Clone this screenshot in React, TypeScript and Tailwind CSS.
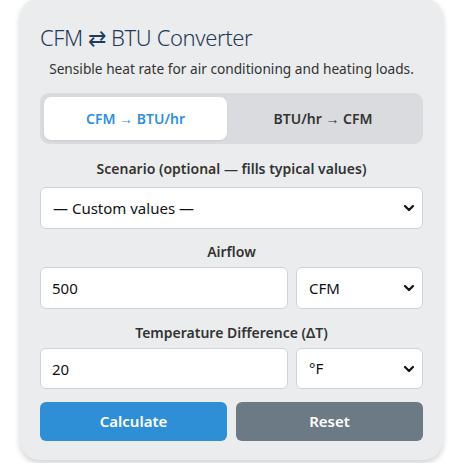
import React, { useState } from "react";

const font = { fontFamily: '"Segoe UI", "Noto Sans", "Open Sans", sans-serif' };

function Chevron() {
  return (
    <svg width="12" height="8" viewBox="0 0 12 8" className="pointer-events-none absolute right-[8px] top-1/2 -translate-y-1/2">
      <path d="M2 2 L6 6 L10 2" fill="none" stroke="#111" strokeWidth="2.2" strokeLinecap="round" strokeLinejoin="round" />
    </svg>
  );
}

function Select({ value, options, className }: { value: string; options: string[]; className?: string }) {
  return (
    <div className={"relative " + (className ?? "")}>
      <select
        defaultValue={value}
        className="h-full w-full appearance-none rounded-[6px] border border-[#cfd3d6] bg-white pl-[12px] pr-[28px] text-[15px] text-[#111] outline-none"
      >
        {options.map((o) => (
          <option key={o}>{o}</option>
        ))}
      </select>
      <Chevron />
    </div>
  );
}

export default function App() {
  const [mode, setMode] = useState(0);
  return (
    <div className="min-h-[465px] bg-white" style={font}>
      <div className="ml-[20px] -mt-[2px] h-[462px] w-[423px] rounded-[20px] bg-[#ebeced] px-[20px] pt-[25px] shadow-[0_3px_6px_rgba(0,0,0,0.18)]">
        <h1 className="text-[22px] font-light leading-[28px] tracking-[-0.4px] text-[#1f3a5a]">CFM ⇄ BTU Converter</h1>
        <p className="mt-[8px] text-center text-[13.7px] leading-[20px] text-[#333]">
          Sensible heat rate for air conditioning and heating loads.
        </p>

        <div className="mt-[14px] flex h-[51px] rounded-[9px] bg-[#d9dbde] p-[4px]">
          {["CFM → BTU/hr", "BTU/hr → CFM"].map((t, i) => (
            <button
              key={t}
              onClick={() => setMode(i)}
              className={
                "rounded-[7px] text-[14px] font-semibold " +
                (i === 0 ? "w-[183px] " : "flex-1 ") +
                (mode === i ? "bg-white text-[#2f8fd8] shadow-[0_1px_2px_rgba(0,0,0,0.08)]" : "text-[#333]")
              }
            >
              {t}
            </button>
          ))}
        </div>

        <div className="mt-[15px] text-center text-[14px] font-semibold leading-[20px] text-[#333]">
          Scenario (optional — fills typical values)
        </div>
        <Select className="mt-[8px] h-[42px]" value="— Custom values —" options={["— Custom values —"]} />

        <div className="mt-[13px] text-center text-[14px] font-semibold leading-[20px] text-[#333]">Airflow</div>
        <div className="mt-[5px] flex h-[42px] gap-[8px]">
          <input
            defaultValue="500"
            className="h-full min-w-0 flex-1 rounded-[6px] border border-[#cfd3d6] bg-white px-[11px] text-[15px] text-[#111] outline-none"
          />
          <Select className="h-full w-[127px]" value="CFM" options={["CFM", "m³/h", "L/s"]} />
        </div>

        <div className="mt-[14px] text-center text-[14px] font-semibold leading-[20px] text-[#333]">
          Temperature Difference (ΔT)
        </div>
        <div className="mt-[5px] flex h-[41px] gap-[8px]">
          <input
            defaultValue="20"
            className="h-full min-w-0 flex-1 rounded-[6px] border border-[#cfd3d6] bg-white px-[11px] text-[15px] text-[#111] outline-none"
          />
          <Select className="h-full w-[127px]" value="°F" options={["°F", "°C"]} />
        </div>

        <div className="mt-[13px] flex h-[39px] gap-[9px]">
          <button className="flex-1 rounded-[6px] bg-[#2e8fd6] text-[15px] font-semibold text-white">Calculate</button>
          <button className="flex-1 rounded-[6px] bg-[#6c7a86] text-[15px] font-semibold text-white">Reset</button>
        </div>
      </div>
    </div>
  );
}
